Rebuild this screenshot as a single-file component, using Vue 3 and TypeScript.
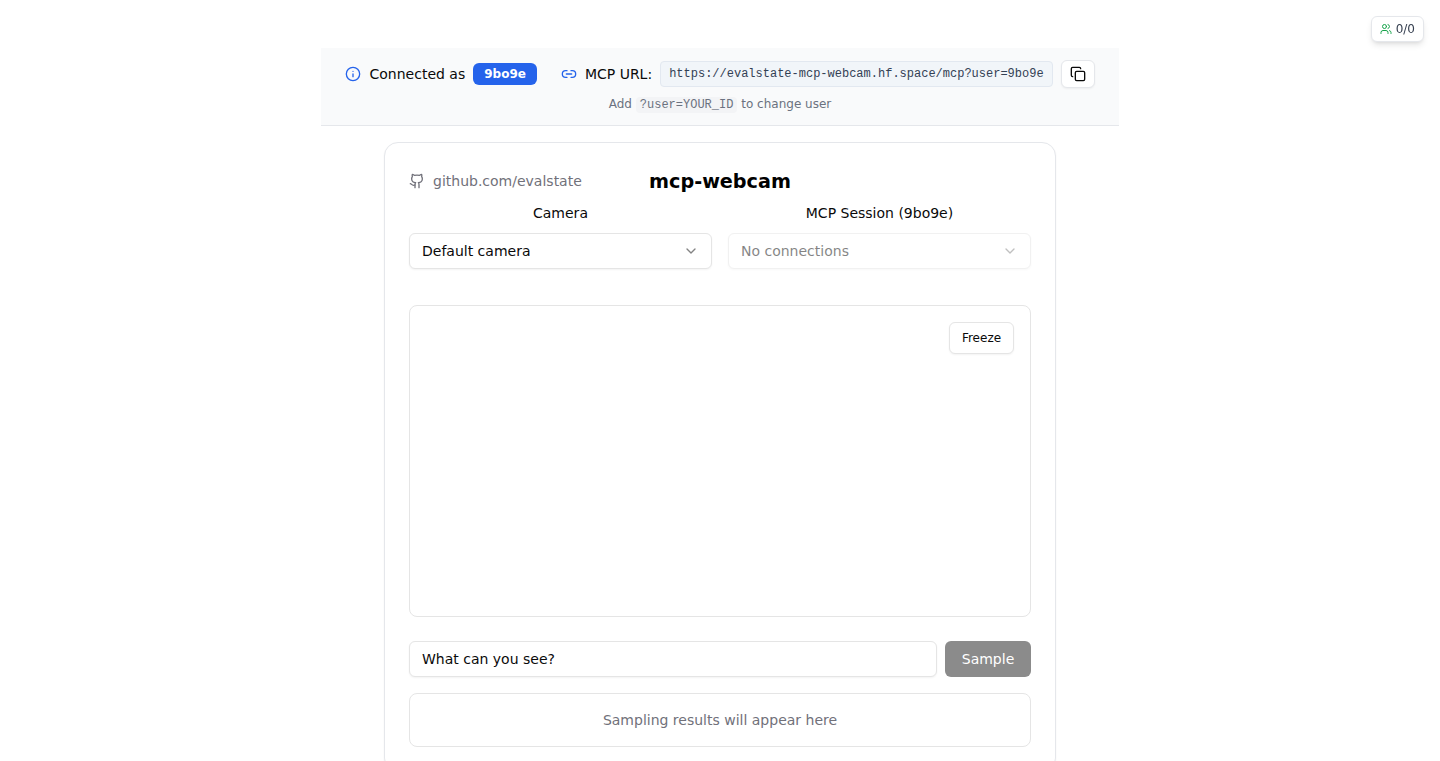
<script setup lang="ts">
import { ref } from 'vue';

const userId = '9bo9e';
const mcpUrl = `https://evalstate-mcp-webcam.hf.space/mcp?user=${userId}`;
const prompt = ref('What can you see?');
</script>

<template>
    <div class="page">
        <div class="presence">
            <svg class="presence-icon" viewBox="0 0 24 24">
                <path d="M16 21v-2a4 4 0 0 0-4-4H6a4 4 0 0 0-4 4v2" />
                <circle cx="9" cy="7" r="4" />
                <path d="M22 21v-2a4 4 0 0 0-3-3.87" />
                <path d="M16 3.13a4 4 0 0 1 0 7.75" />
            </svg>
            <span>0/0</span>
        </div>

        <div class="banner">
            <div class="banner-row">
                <svg class="icon blue info-icon" viewBox="0 0 24 24">
                    <circle cx="12" cy="12" r="10" />
                    <path d="M12 16v-4" />
                    <path d="M12 8h.01" />
                </svg>
                <span>Connected as</span>
                <span class="user-badge">{{ userId }}</span>
                <svg class="icon blue link-icon" viewBox="0 0 24 24">
                    <path d="M9 17H7A5 5 0 0 1 7 7h2" />
                    <path d="M15 7h2a5 5 0 1 1 0 10h-2" />
                    <line x1="8" x2="16" y1="12" y2="12" />
                </svg>
                <span>MCP URL:</span>
                <code class="url">{{ mcpUrl }}</code>
                <button class="copy" type="button">
                    <svg class="icon" viewBox="0 0 24 24">
                        <rect x="8" y="8" width="14" height="14" rx="2" ry="2" />
                        <path d="M4 16c-1.1 0-2-.9-2-2V4c0-1.1.9-2 2-2h10c1.100 0 2 .9 2 2" />
                    </svg>
                </button>
            </div>
            <div class="hint">Add <code>?user=YOUR_ID</code> to change user</div>
        </div>

        <div class="card">
            <div class="card-head">
                <a class="repo">
                    <svg class="icon" viewBox="0 0 24 24">
                        <path d="M15 22v-4a4.800 4.800 0 0 0-1-3.500c3 0 6-2 6-5.500.08-1.250-.27-2.480-1-3.500.28-1.150.28-2.350 0-3.500 0 0-1 0-3 1.500-2.640-.5-5.360-.5-8 0C6 2 5 2 5 2c-.3 1.150-.3 2.350 0 3.500A5.403 5.403 0 0 0 4 9c0 3.500 3 5.500 6 5.500-.39.49-.68 1.050-.85 1.650-.17.6-.22 1.230-.15 1.850v4" />
                        <path d="M9 18c-4.510 2-5-2-7-2" />
                    </svg>
                    <span>github.com/evalstate</span>
                </a>
                <h1>mcp-webcam</h1>
            </div>

            <div class="selects">
                <div class="field">
                    <label>Camera</label>
                    <button class="select" type="button">
                        <span>Default camera</span>
                        <svg class="chevron" viewBox="0 0 24 24"><path d="m6 9 6 6 6-6" /></svg>
                    </button>
                </div>
                <div class="field">
                    <label>MCP Session ({{ userId }})</label>
                    <button class="select disabled" type="button" disabled>
                        <span>No connections</span>
                        <svg class="chevron" viewBox="0 0 24 24"><path d="m6 9 6 6 6-6" /></svg>
                    </button>
                </div>
            </div>

            <div class="video">
                <button class="freeze" type="button">Freeze</button>
            </div>

            <div class="prompt-row">
                <input v-model="prompt" class="prompt" type="text" />
                <button class="sample" type="button" disabled>Sample</button>
            </div>

            <div class="results">Sampling results will appear here</div>
        </div>
    </div>
</template>

<style>
html,
body {
    background: #ffffff;
}
</style>

<style scoped>
.page {
    display: flex;
    flex-direction: column;
    align-items: center;
    padding-top: 48px;
    padding-bottom: 32px;
    font-family: 'DejaVu Sans', sans-serif;
    color: #0a0a0a;
    font-size: 14px;
    line-height: 20px;
}

.icon {
    width: 16px;
    height: 16px;
    flex: none;
    fill: none;
    stroke: currentColor;
    stroke-width: 2;
    stroke-linecap: round;
    stroke-linejoin: round;
}

.blue {
    color: #2563eb;
}

.presence {
    position: fixed;
    top: 16px;
    right: 16px;
    display: flex;
    align-items: center;
    gap: 4px;
    height: 26px;
    padding: 0 8px;
    box-sizing: border-box;
    background: #ffffff;
    border: 1px solid #e5e7eb;
    border-radius: 6px;
    box-shadow: 0 4px 6px -1px rgba(0, 0, 0, 0.1), 0 2px 4px -2px rgba(0, 0, 0, 0.1);
    font-size: 12px;
    color: #374151;
}

.presence-icon {
    width: 12px;
    height: 12px;
    fill: none;
    stroke: #16a34a;
    stroke-width: 2;
    stroke-linecap: round;
    stroke-linejoin: round;
}

.banner {
    width: 798px;
    box-sizing: border-box;
    padding: 12px 24px;
    background: #f9fafb;
    border-bottom: 1px solid #e5e7eb;
}

.banner-row {
    display: flex;
    align-items: center;
    gap: 8px;
    height: 28px;
}

.banner-row > span {
    white-space: nowrap;
}

.info-icon {
    margin-right: 0.500px;
}

.user-badge {
    padding: 0 11px;
    background: #2563eb;
    border-radius: 6px;
    color: #ffffff;
    font-size: 12px;
    font-weight: 700;
    line-height: 22px;
}

.link-icon {
    margin-left: 16px;
}

.url {
    flex: none;
    width: 393px;
    box-sizing: border-box;
    padding: 0 8px;
    background: #f1f5f9;
    border: 1px solid #e2e8f0;
    border-radius: 4px;
    color: #334155;
    font-family: 'Liberation Mono', monospace;
    font-size: 12px;
    line-height: 24px;
    white-space: nowrap;
}

.copy {
    display: flex;
    align-items: center;
    justify-content: center;
    flex: none;
    width: 34px;
    height: 28px;
    padding: 0;
    background: #ffffff;
    border: 1px solid #e5e7eb;
    border-radius: 6px;
    box-shadow: 0 1px 2px 0 rgba(0, 0, 0, 0.05);
    color: #0a0a0a;
}

.hint {
    margin-top: 8px;
    text-align: center;
    font-size: 12px;
    line-height: 16px;
    color: #6b7280;
}

.hint code {
    padding: 1px 4px;
    background: #f3f4f6;
    border-radius: 4px;
    font-family: 'Liberation Mono', monospace;
    font-size: 12px;
}

.card {
    width: 672px;
    box-sizing: border-box;
    margin-top: 16px;
    padding: 24px;
    background: #ffffff;
    border: 1px solid #e5e7eb;
    border-radius: 14px;
    box-shadow: 0 1px 2px 0 rgba(0, 0, 0, 0.05);
}

.card-head {
    display: grid;
    grid-template-columns: 1fr auto 1fr;
    grid-template-rows: 28px;
    align-items: center;
}

.card-head h1 {
    align-self: start;
    margin: 1px 0 0;
    font-size: 19.200px;
    line-height: 28px;
    font-weight: 700;
    color: #000000;
}

.repo {
    display: flex;
    align-items: center;
    gap: 8px;
    color: #71717a;
}

.selects {
    display: grid;
    grid-template-columns: 1fr 1fr;
    gap: 16px;
    margin-top: 8px;
}

.field {
    display: flex;
    flex-direction: column;
    gap: 10px;
}

.field label {
    text-align: center;
    line-height: 20px;
}

.select {
    display: flex;
    align-items: center;
    justify-content: space-between;
    height: 36px;
    padding: 0 12px;
    background: #ffffff;
    border: 1px solid #e5e5e5;
    border-radius: 6px;
    box-shadow: 0 1px 2px 0 rgba(0, 0, 0, 0.05);
    color: #0a0a0a;
    font-family: inherit;
    font-size: 14px;
}

.select.disabled {
    opacity: 0.5;
}

.chevron {
    width: 16px;
    height: 16px;
    fill: none;
    stroke: #0a0a0a;
    stroke-width: 2;
    stroke-linecap: round;
    stroke-linejoin: round;
    opacity: 0.5;
}

.video {
    position: relative;
    height: 312px;
    box-sizing: border-box;
    margin-top: 36px;
    border: 1px solid #e5e5e5;
    border-radius: 8px;
}

.freeze {
    position: absolute;
    top: 16px;
    right: 16px;
    width: 65px;
    height: 32px;
    padding: 0;
    background: #ffffff;
    border: 1px solid #e5e5e5;
    border-radius: 6px;
    box-shadow: 0 1px 2px 0 rgba(0, 0, 0, 0.05);
    color: #0a0a0a;
    font-family: inherit;
    font-size: 12px;
}

.prompt-row {
    display: flex;
    gap: 8px;
    margin-top: 24px;
}

.prompt {
    flex: 1;
    min-width: 0;
    height: 36px;
    box-sizing: border-box;
    padding: 0 12px;
    background: #ffffff;
    border: 1px solid #e5e5e5;
    border-radius: 6px;
    box-shadow: 0 1px 2px 0 rgba(0, 0, 0, 0.05);
    color: #0a0a0a;
    font-family: inherit;
    font-size: 14px;
    outline: none;
}

.sample {
    width: 86px;
    height: 36px;
    padding: 0;
    background: #8b8b8b;
    border: none;
    border-radius: 6px;
    color: #ffffff;
    font-family: inherit;
    font-size: 14px;
}

.results {
    display: flex;
    align-items: center;
    justify-content: center;
    height: 54px;
    box-sizing: border-box;
    margin-top: 16px;
    border: 1px solid #e5e5e5;
    border-radius: 8px;
    color: #71717a;
}
</style>
